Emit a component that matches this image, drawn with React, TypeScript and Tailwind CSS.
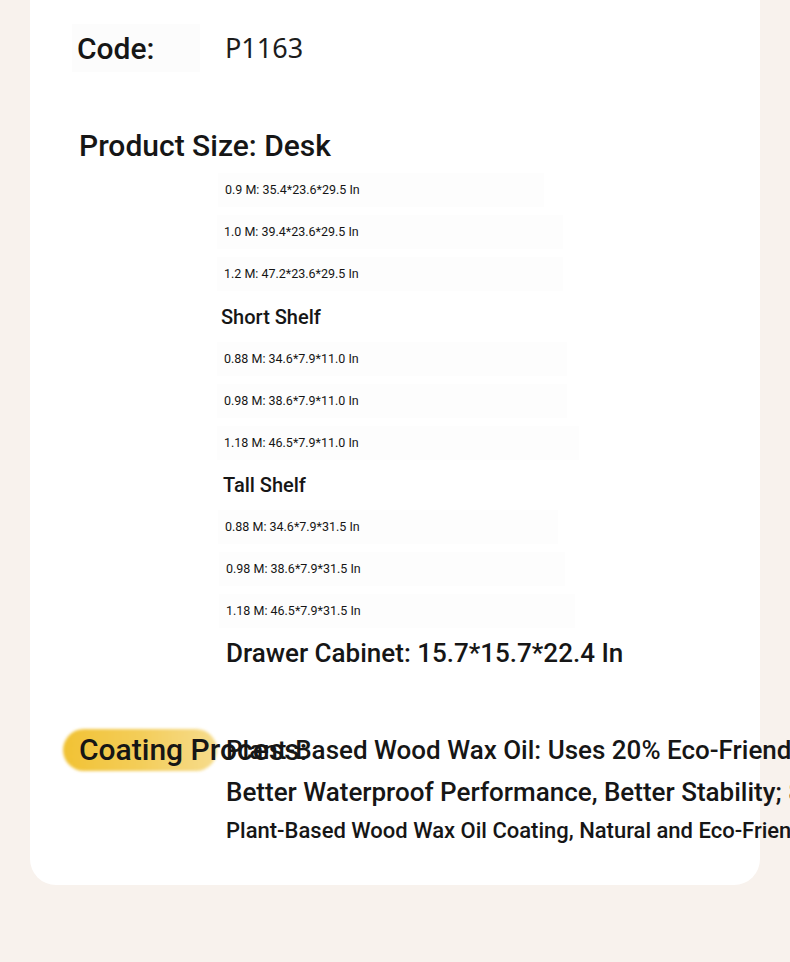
import React from "react";

const rob = { fontFamily: "Roboto, 'Liberation Sans', sans-serif" } as React.CSSProperties;

function Row({ text, pl, w }: { text: string; pl: string; w: string }) {
  return (
    <div className={`flex h-[42px] items-center ${pl}`}>
      <div className={`flex h-[34px] items-center bg-[#fdfdfd] px-[7px] ${w}`}>
        <span className="whitespace-nowrap text-[12.5px] text-[#151515]">{text}</span>
      </div>
    </div>
  );
}

export default function App() {
  return (
    <div className="min-h-[962px] w-[790px] overflow-hidden bg-[#f8f2ed]" style={rob}>
      <div className="ml-[30px] mt-[-30px] w-[730px] rounded-b-[26px] bg-white pb-[46px] pt-[54px]">
        <div className="flex items-center">
          <div className="ml-[42px] flex h-[48px] w-[128px] items-center bg-[#fcfcfc] pl-[5px]">
            <span className="text-[30px] font-medium text-[#161616]">Code:</span>
          </div>
          <span
            className="ml-[25px] text-[27px] font-normal text-[#1c1c1c]"
            style={{ fontFamily: "'Noto Sans', sans-serif" }}
          >
            P1163
          </span>
        </div>

        <div className="ml-[49px] mt-[54px] text-[30px] font-medium leading-[40px] text-[#161616]">
          Product Size: Desk
        </div>

        <div className="mt-[3px] flex flex-col">
          <Row text="0.9 M: 35.4*23.6*29.5 In" pl="pl-[188px]" w="w-[326px]" />
          <Row text="1.0 M: 39.4*23.6*29.5 In" pl="pl-[187px]" w="w-[346px]" />
          <Row text="1.2 M: 47.2*23.6*29.5 In" pl="pl-[187px]" w="w-[346px]" />
          <div className="flex h-[43px] items-center pl-[191px]">
            <span className="text-[20px] font-medium text-[#161616]">Short Shelf</span>
          </div>
          <Row text="0.88 M: 34.6*7.9*11.0 In" pl="pl-[187px]" w="w-[350px]" />
          <Row text="0.98 M: 38.6*7.9*11.0 In" pl="pl-[187px]" w="w-[350px]" />
          <Row text="1.18 M: 46.5*7.9*11.0 In" pl="pl-[187px]" w="w-[362px]" />
          <div className="flex h-[42px] items-center pl-[193px]">
            <span className="text-[20px] font-medium text-[#161616]">Tall Shelf</span>
          </div>
          <Row text="0.88 M: 34.6*7.9*31.5 In" pl="pl-[188px]" w="w-[340px]" />
          <Row text="0.98 M: 38.6*7.9*31.5 In" pl="pl-[189px]" w="w-[346px]" />
          <Row text="1.18 M: 46.5*7.9*31.5 In" pl="pl-[189px]" w="w-[356px]" />
          <div className="flex h-[42px] items-center pl-[196px]">
            <span className="whitespace-nowrap text-[26px] font-medium text-[#161616]">
              Drawer Cabinet: 15.7*15.7*22.4 In
            </span>
          </div>
        </div>

        <div className="relative mt-[45px] h-[120px]">
          <div className="absolute left-[33px] top-[10px] h-[42px] w-[154px] rounded-full bg-gradient-to-r from-[#f1c232] via-[#f3cd58] to-[#f6dc8c] blur-[1.5px]" />
          <div className="absolute left-[49px] top-[10px] whitespace-nowrap text-[30px] font-medium leading-[42px] text-[#161616]">
            Coating Process:
          </div>
          <div className="absolute left-[196px] top-[10px] flex flex-col whitespace-nowrap text-[#161616]">
            <span className="text-[26px] font-medium leading-[42px]">
              Plant-Based Wood Wax Oil: Uses 20% Eco-Friendly Wood Wax Oil
            </span>
            <span className="text-[26px] font-medium leading-[42px]">
              Better Waterproof Performance, Better Stability; 80%
            </span>
            <span className="text-[22px] font-medium leading-[36px]">
              Plant-Based Wood Wax Oil Coating, Natural and Eco-Friendly
            </span>
          </div>
        </div>
      </div>
    </div>
  );
}
